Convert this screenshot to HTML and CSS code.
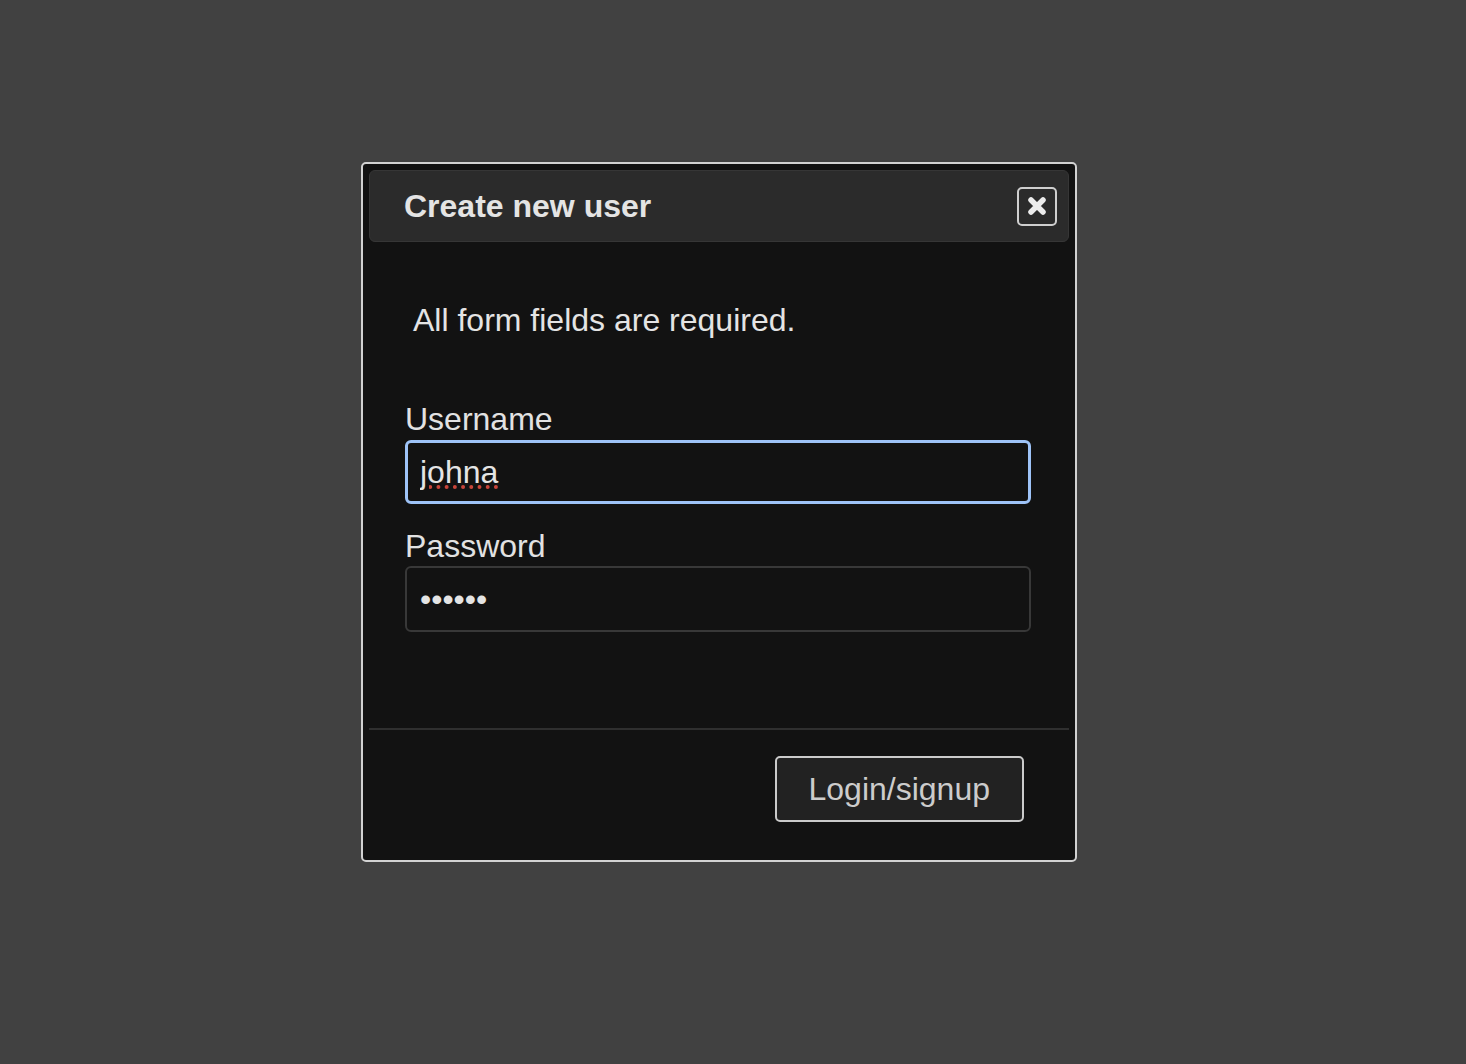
FILE: index.html
```html
<!DOCTYPE html>
<html lang="en">
<head>
<meta charset="utf-8">
<title>Create new user</title>
<link rel="stylesheet" href="styles.css">
</head>
<body>
<div class="page">
  <div class="dialog" role="dialog" aria-labelledby="dlg-title">
    <div class="titlebar">
      <span class="title" id="dlg-title">Create new user</span>
      <button class="close-btn" type="button" aria-label="Close">
        <svg width="22" height="22" viewBox="0 0 22 22" aria-hidden="true">
          <path d="M5 5 L17 17 M17 5 L5 17" stroke="#ececec" stroke-width="5.5" stroke-linecap="round" fill="none"/>
        </svg>
      </button>
    </div>
    <div class="content">
      <p class="note">All form fields are required.</p>
      <form class="form">
        <label class="label" for="username">Username</label>
        <input class="field field-focused spell" id="username" type="text" value="johna" autofocus>
        <label class="label label-pw" for="password">Password</label>
        <input class="field" id="password" type="password" value="secret">
      </form>
    </div>
    <div class="buttonpane">
      <button class="action-btn" type="button">Login/signup</button>
    </div>
  </div>
</div>
</body>
</html>
```

FILE: styles.css
```css
* { box-sizing: border-box; }

html, body {
  margin: 0;
  padding: 0;
  background: #414141;
  font-family: "Liberation Sans", Arial, Helvetica, sans-serif;
  color: #e2e2e2;
}

body { min-height: 1064px; }

.page {
  padding: 162px 0 0 361px;
}

.dialog {
  width: 716px;
  border: 2px solid #d2d2d2;
  border-radius: 5px;
  background: #121212;
  padding: 6px;
  display: flex;
  flex-direction: column;
}

.titlebar {
  height: 72px;
  background: #2b2b2b;
  border: 1px solid #363636;
  border-radius: 6px;
  display: flex;
  align-items: center;
  justify-content: space-between;
  padding: 0 11px 0 34px;
}

.title {
  font-size: 32px;
  font-weight: bold;
  line-height: 37px;
  color: #e4e4e4;
}

.close-btn {
  width: 40px;
  height: 39px;
  border: 2px solid #cfcfcf;
  border-radius: 5px;
  background: #2b2b2b;
  padding: 0;
  display: flex;
  align-items: center;
  justify-content: center;
  cursor: pointer;
}

.close-btn svg { display: block; }

.content {
  padding: 60px 38px 96px 36px;
}

.note {
  margin: 0 0 62px 0;
  padding-left: 8px;
  font-size: 32px;
  line-height: 37px;
  color: #e4e4e4;
}

.form {
  display: flex;
  flex-direction: column;
}

.label {
  display: block;
  font-size: 32px;
  line-height: 37px;
  color: #e2e2e2;
  margin-bottom: 2px;
}

.label-pw {
  margin-top: 24px;
  margin-bottom: 1px;
}

.field {
  width: 626px;
  height: 66px;
  background: #121212;
  border: 2px solid #383838;
  border-radius: 6px;
  padding: 0 12px 0 13px;
  font-family: "Liberation Sans", Arial, Helvetica, sans-serif;
  font-size: 32px;
  color: #e4e4e4;
  caret-color: #e4e4e4;
  outline: none;
}

.field-focused,
.field-focused:focus {
  height: 64px;
  border: 3px solid #9ec3f7;
  padding-left: 12px;
}

.spell {
  text-decoration: underline dotted #c8453a;
  text-decoration-thickness: 4px;
  text-underline-offset: 3px;
}

.buttonpane {
  border-top: 2px solid #2f2f2f;
  padding: 26px 45px 32px 0;
  display: flex;
  justify-content: flex-end;
}

.action-btn {
  height: 66px;
  padding: 0 32px;
  border: 2px solid #cacaca;
  border-radius: 5px;
  background: #222222;
  color: #cccccc;
  font-family: "Liberation Sans", Arial, Helvetica, sans-serif;
  font-size: 32px;
  cursor: pointer;
}
```
